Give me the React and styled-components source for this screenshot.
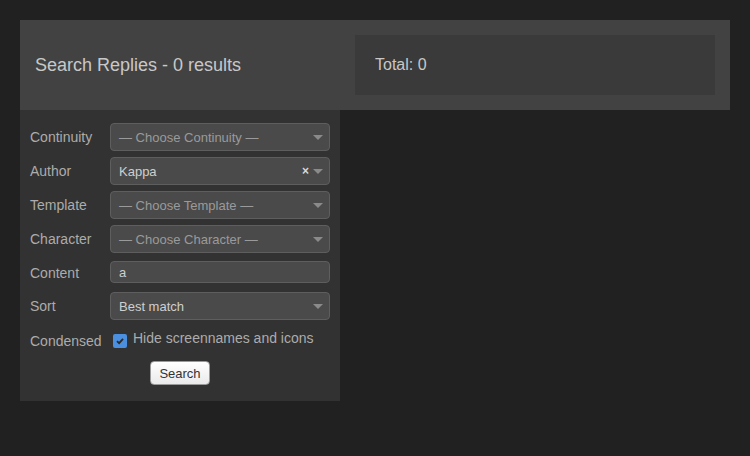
import React from "react";
import styled, { createGlobalStyle } from "styled-components";

const Global = createGlobalStyle`
  html, body { margin: 0; padding: 0; background: #212121; }
  body { font-family: "Liberation Sans", Arial, sans-serif; }
  * { box-sizing: border-box; }
`;

const Page = styled.div`
  padding: 20px;
  width: 750px;
  height: 456px;
`;

const Header = styled.div`
  display: flex;
  align-items: stretch;
  width: 710px;
  height: 90px;
  background: #424242;
`;

const Title = styled.div`
  width: 320px;
  padding-left: 15px;
  display: flex;
  align-items: center;
  font-size: 18px;
  color: #c8c8c8;
`;

const TotalBox = styled.div`
  flex: 1;
  margin: 15px;
  background: #3a3a3a;
  padding-left: 20px;
  display: flex;
  align-items: center;
  font-size: 16px;
  color: #c8c8c8;
`;

const Form = styled.div`
  width: 320px;
  background: #323232;
  padding: 10px 10px 16px 10px;
`;

const Row = styled.div`
  display: flex;
  align-items: center;
  height: ${(p) => p.$h || 34}px;
`;

const Label = styled.div`
  width: 80px;
  font-size: 14px;
  color: #acacac;
  padding-top: ${(p) => p.$pt || 0}px;
`;

const SelectBox = styled.div`
  width: 220px;
  height: 28px;
  background: #4a4a4a;
  border: 1px solid #5e5e5e;
  border-radius: 4px;
  display: flex;
  align-items: center;
  padding-left: 8px;
  font-size: 13px;
  color: ${(p) => (p.$placeholder ? "#9a9a9a" : "#cfcfcf")};
`;

const Value = styled.span`
  flex: 1;
`;

const Clear = styled.span`
  font-size: 12px;
  font-weight: bold;
  color: #d8d8d8;
  margin-right: 4px;
  line-height: 1;
`;

const Arrow = styled.span`
  width: 0;
  height: 0;
  border-left: 5px solid transparent;
  border-right: 5px solid transparent;
  border-top: 5px solid #8a8a8a;
  margin-right: 6px;
`;

const TextInput = styled.div`
  width: 220px;
  height: 22px;
  background: #4a4a4a;
  border: 1px solid #5e5e5e;
  border-radius: 4px;
  display: flex;
  align-items: center;
  padding-left: 8px;
  font-size: 13px;
  color: #cfcfcf;
  margin-top: -1px;
`;

const CheckWrap = styled.label`
  display: flex;
  align-items: flex-start;
  gap: 6px;
  font-size: 14px;
  color: #acacac;
  margin-left: 3px;
`;

const Box = styled.span`
  width: 14px;
  height: 14px;
  border-radius: 2px;
  background: #4a8fe0;
  display: flex;
  align-items: center;
  justify-content: center;
  margin-top: 3px;
`;

const CheckText = styled.span`
  margin-top: -1px;
`;

const ButtonRow = styled.div`
  display: flex;
  justify-content: center;
  padding-top: 6px;
`;

const Button = styled.button`
  width: 60px;
  height: 24px;
  border: 1px solid #9a9a9a;
  border-radius: 4px;
  background: linear-gradient(#ffffff, #eaeaea);
  font-family: "Liberation Sans", Arial, sans-serif;
  font-size: 13px;
  color: #333;
  padding: 0;
`;

function Select({ value, placeholder, clearable }) {
  return (
    <SelectBox $placeholder={placeholder}>
      <Value>{value}</Value>
      {clearable && <Clear>×</Clear>}
      <Arrow />
    </SelectBox>
  );
}

export default function App() {
  return (
    <>
      <Global />
      <Page>
        <Header>
          <Title>Search Replies - 0 results</Title>
          <TotalBox>Total: 0</TotalBox>
        </Header>
        <Form>
          <Row>
            <Label>Continuity</Label>
            <Select value="— Choose Continuity —" placeholder />
          </Row>
          <Row>
            <Label>Author</Label>
            <Select value="Kappa" clearable />
          </Row>
          <Row>
            <Label>Template</Label>
            <Select value="— Choose Template —" placeholder />
          </Row>
          <Row>
            <Label>Character</Label>
            <Select value="— Choose Character —" placeholder />
          </Row>
          <Row $h={33}>
            <Label>Content</Label>
            <TextInput>a</TextInput>
          </Row>
          <Row>
            <Label>Sort</Label>
            <Select value="Best match" />
          </Row>
          <Row $h={32}>
            <Label $pt={3}>Condensed</Label>
            <CheckWrap>
              <Box>
                <svg width="10" height="10" viewBox="0 0 10 10">
                  <path d="M2 5.2 L4.1 7.2 L8 2.8" fill="none" stroke="#2a2a2a" strokeWidth="1.8" />
                </svg>
              </Box>
              <CheckText>Hide screennames and icons</CheckText>
            </CheckWrap>
          </Row>
          <ButtonRow>
            <Button>Search</Button>
          </ButtonRow>
        </Form>
      </Page>
    </>
  );
}
